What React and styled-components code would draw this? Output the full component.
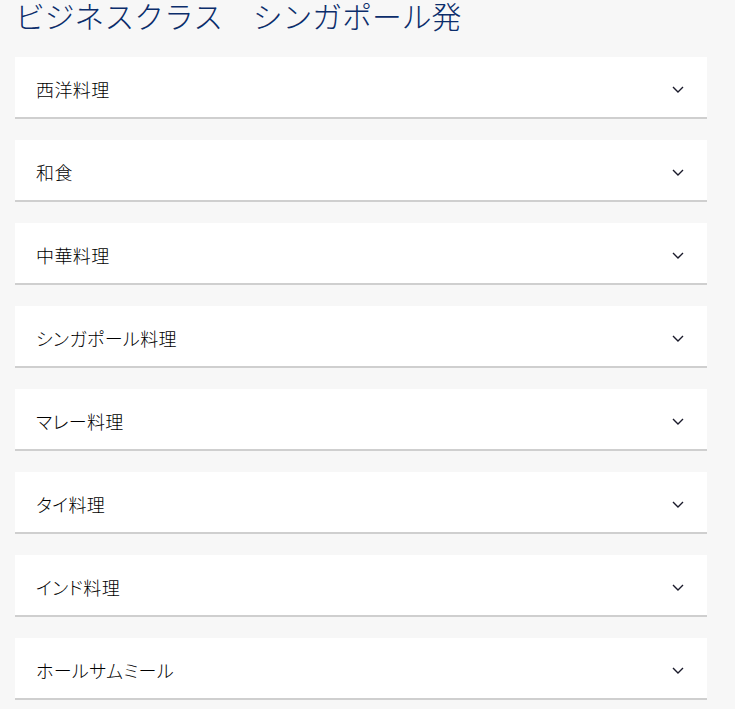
import React from "react";
import styled, { createGlobalStyle } from "styled-components";

const GlobalStyle = createGlobalStyle`
  html, body {
    margin: 0;
    padding: 0;
    background: #f7f7f7;
  }
  body {
    font-family: "Noto Sans CJK JP", "Noto Sans", sans-serif;
  }
`;

const Page = styled.main`
  padding: 0 28px 0 15px;
  box-sizing: border-box;
  width: 735px;
`;

const Title = styled.h1`
  margin: 0 0 27px;
  font-size: 29.8px;
  line-height: 30px;
  font-weight: 300;
  color: #0b2d6b;
  white-space: nowrap;
`;

const List = styled.div`
  display: flex;
  flex-direction: column;
  gap: 21px;
`;

const Item = styled.button`
  display: flex;
  align-items: center;
  justify-content: space-between;
  width: 100%;
  height: 62px;
  box-sizing: border-box;
  padding: 4px 23px 0 21px;
  border: none;
  border-bottom: 2px solid #cfcfcf;
  background: #ffffff;
  font-family: inherit;
  cursor: pointer;
  text-align: left;
`;

const Label = styled.span`
  font-size: 18px;
  line-height: 24px;
  font-weight: 300;
  letter-spacing: 0.4px;
  font-feature-settings: "palt";
  color: #000000;
`;

const Chevron = () => (
  <svg width="12" height="7" viewBox="0 0 12 7" fill="none">
    <path d="M1 1 L6 6 L11 1" stroke="#1a1a2a" strokeWidth="1.4" />
  </svg>
);

const items = [
  "西洋料理",
  "和食",
  "中華料理",
  "シンガポール料理",
  "マレー料理",
  "タイ料理",
  "インド料理",
  "ホールサムミール",
];

export default function App() {
  return (
    <>
      <GlobalStyle />
      <Page>
        <Title>ビジネスクラス　シンガポール発</Title>
        <List>
          {items.map((name) => (
            <Item key={name} type="button">
              <Label>{name}</Label>
              <Chevron />
            </Item>
          ))}
        </List>
      </Page>
    </>
  );
}
